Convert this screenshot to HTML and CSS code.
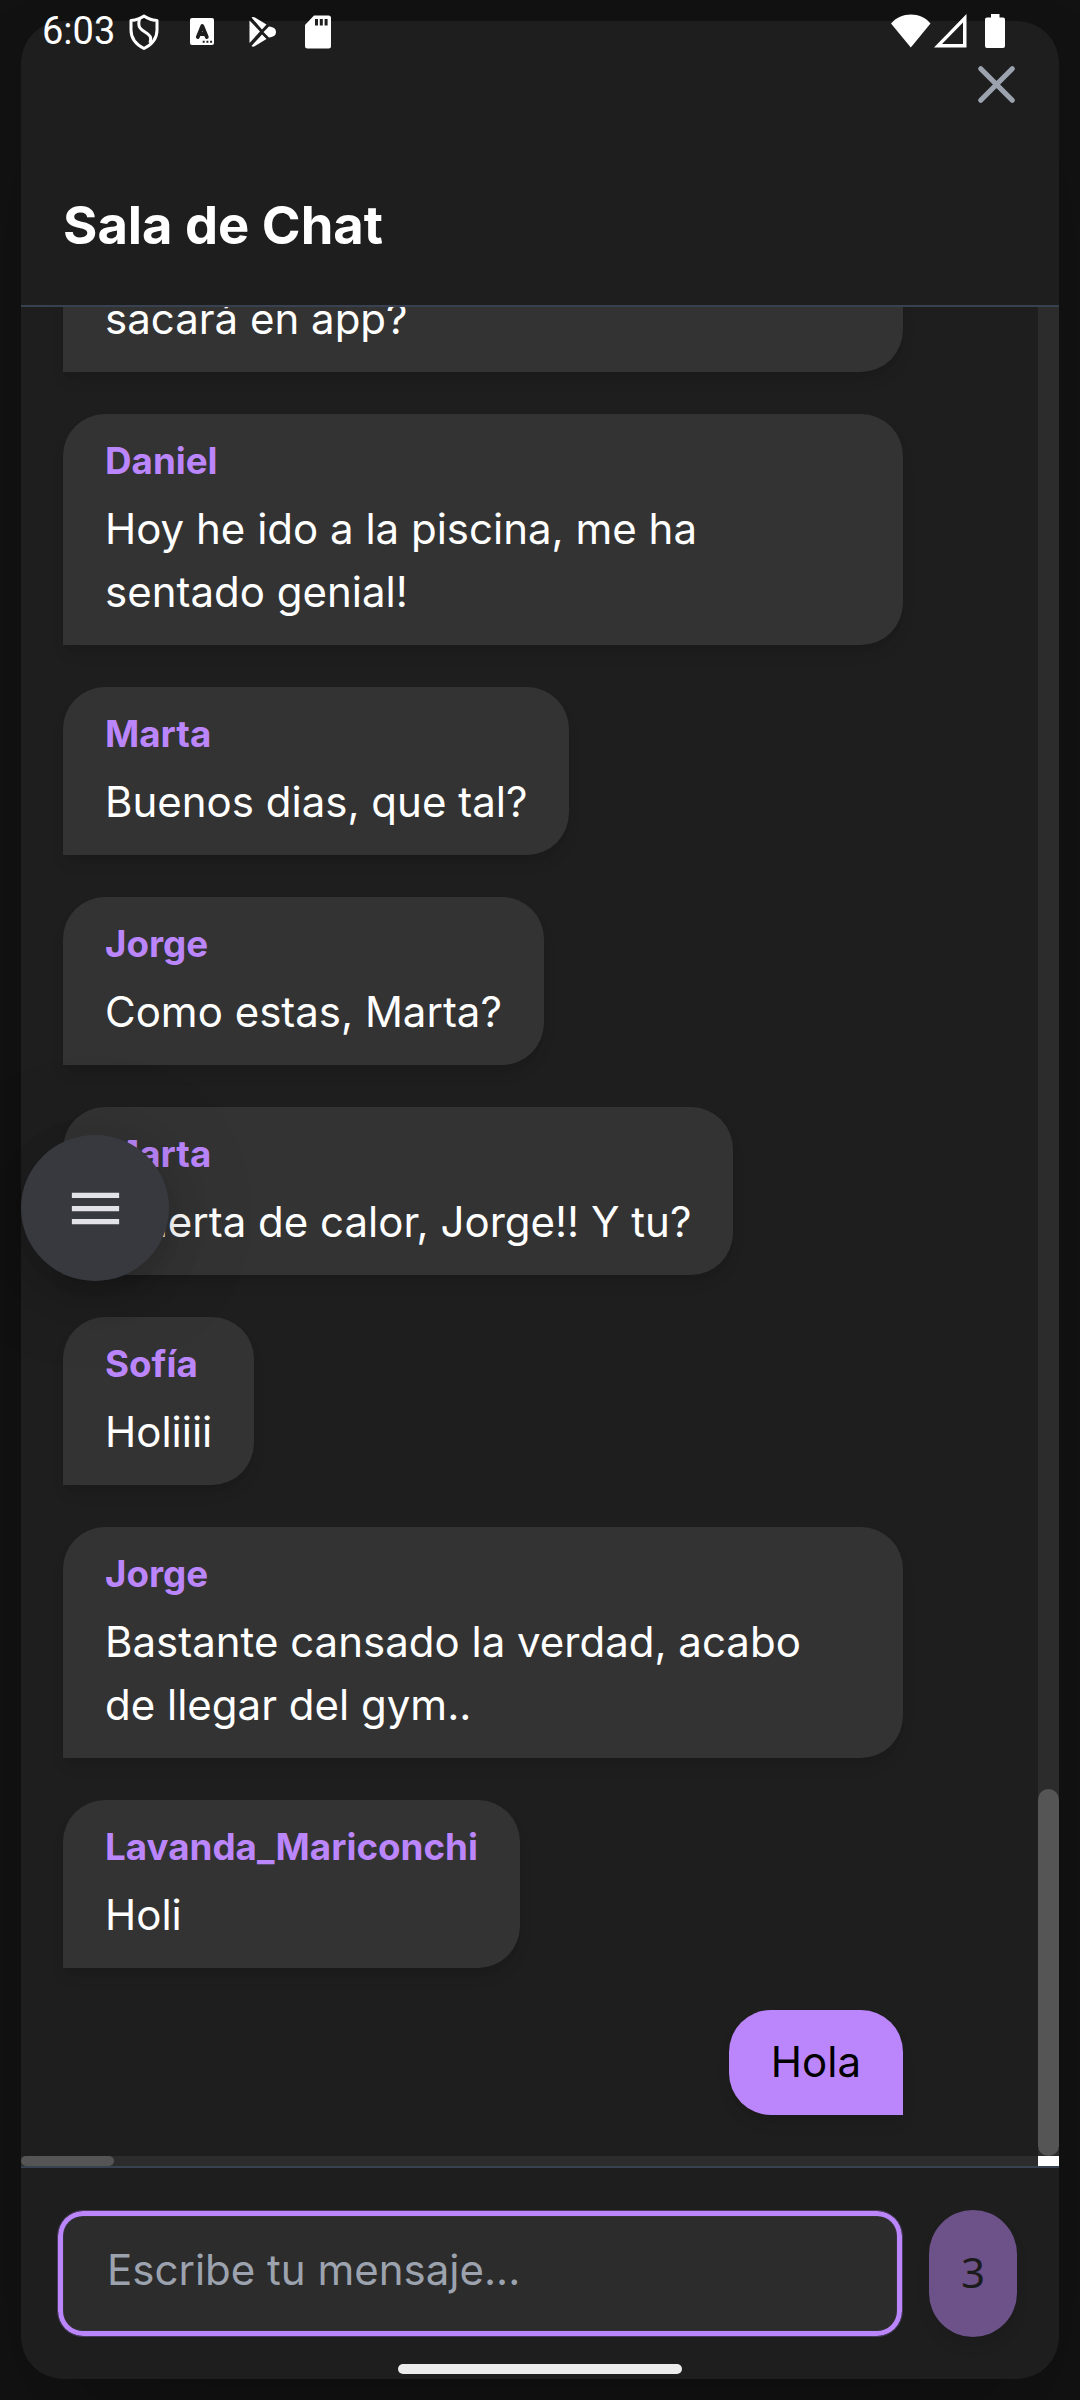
FILE: index.html
```html
<!DOCTYPE html>
<html lang="es">
<head>
<meta charset="utf-8">
<title>Sala de Chat</title>
<link rel="stylesheet" href="styles.css">
</head>
<body>
<div class="screen">
  <main class="panel">
    <header class="header">
      <button class="close" aria-label="Cerrar">
        <svg width="63" height="63" viewBox="0 0 24 24" fill="none" stroke="currentColor" stroke-width="2" stroke-linecap="round"><path d="M6 18L18 6M6 6l12 12"/></svg>
      </button>
      <h1 class="title">Sala de Chat</h1>
    </header>

    <section class="log">
      <div class="messages">
        <article class="bubble wide"><p class="text">sacará en app?</p></article>
        <article class="bubble"><p class="name">Daniel</p><p class="text">Hoy he ido a la piscina, me ha sentado genial!</p></article>
        <article class="bubble"><p class="name">Marta</p><p class="text">Buenos dias, que tal?</p></article>
        <article class="bubble"><p class="name">Jorge</p><p class="text">Como estas, Marta?</p></article>
        <article class="bubble"><p class="name">Marta</p><p class="text">Muerta de calor, Jorge!! Y tu?</p></article>
        <article class="bubble"><p class="name">Sofía</p><p class="text">Holiiii</p></article>
        <article class="bubble"><p class="name">Jorge</p><p class="text">Bastante cansado la verdad, acabo de llegar del gym..</p></article>
        <article class="bubble"><p class="name">Lavanda_Mariconchi</p><p class="text">Holi</p></article>
        <article class="bubble own"><p class="text">Hola</p></article>
      </div>
      <div class="vtrack"><div class="vthumb"></div></div>
      <div class="htrack"><div class="hthumb"></div></div>
      <div class="corner"></div>
    </section>

    <footer class="composer">
      <div class="field"><span class="placeholder">Escribe tu mensaje...</span></div>
      <button class="send">3</button>
    </footer>
  </main>

  <button class="fab" aria-label="Menú">
    <svg width="63" height="63" viewBox="0 0 24 24" fill="currentColor"><path d="M3 18h18v-2H3v2zm0-5h18v-2H3v2zm0-7v2h18V6H3z"/></svg>
  </button>

  <div class="status">
    <div class="status-left">
      <span class="time">6:03</span>
      <svg class="shield" width="30" height="36" viewBox="0 0 30 36" fill="none" stroke="#fff" stroke-width="3" stroke-linejoin="round"><path d="M15 2C11 5 7 6 2 6.500V16C2 25 8 31 15 34.500C22 31 28 25 28 16V6.500C23 6 19 5 15 2Z"/><path d="M10.500 5C8.500 13 11 15 16 18C21 21 23 23 21 29" stroke-width="3"/></svg>
      <svg class="abox" width="24" height="28" viewBox="0 0 24 28"><rect width="24" height="27" rx="2" fill="#fff"/><path d="M7.800 19L12.300 8L16.800 19M9.500 16H15" fill="none" stroke="#1e1e1e" stroke-width="3.800" stroke-linejoin="round" stroke-linecap="round"/><path d="M12.700 22.700h2v2h-2zM16.400 22.700h2v2h-2zM20.100 22.700h2v2h-2z" fill="#1e1e1e"/></svg>
      <svg class="play" width="28" height="32" viewBox="0 0 28 32" fill="#fff"><path d="M0.500 4.500L11 15.500L0.500 27ZM2.500 1.500C3.500 0.500 5 1 6 1.500L17.500 8.500L13 13.500ZM2.500 30L13 18.500L17.500 23L6 30C5 30.800 3.500 31 2.500 30ZM14.500 16L20 10.500C25 11 27 13 27 16S25 21 20 21.500Z"/></svg>
      <svg class="sd" width="26" height="34" viewBox="0 0 26 34"><path d="M9 0.500H23.500Q26 0.500 26 3V31Q26 33.500 23.500 33.500H2.500Q0 33.500 0 31V10Z" fill="#fff"/><path d="M10 4h3v6.500h-3zM14.800 4h3v6.500h-3zM19.600 4h3v6.500h-3z" fill="#1e1e1e"/></svg>
    </div>
    <div class="status-right">
      <svg class="wifi" width="40" height="34" viewBox="0 0 40 34"><path d="M0 9.500C10-2.500 30-2.500 39.500 9.500L19.800 33.500Z" fill="#fff"/></svg>
      <svg class="signal" width="33" height="34" viewBox="0 0 33 34"><path d="M0 33.500L32.500 0V33.500ZM8 30H29V8.500Z" fill="#fff" fill-rule="evenodd"/></svg>
      <svg class="battery" width="20" height="34" viewBox="0 0 20 34"><path d="M6 0H14.500V3.500H18Q20 3.500 20 5.500V32Q20 34 18 34H2Q0 34 0 32V5.500Q0 3.500 2 3.500H6Z" fill="#fff"/></svg>
    </div>
  </div>
  <div class="home-bar"></div>
</div>
</body>
</html>
```
FILE: styles.css
```css
* { box-sizing: border-box; margin: 0; }

body {
  background: #121212;
  color: #fff;
  font-family: Inter, "Noto Sans", sans-serif;
  font-size: 42px;
  line-height: 63px;
}

button {
  border: 0;
  padding: 0;
  background: none;
  font: inherit;
}

.screen {
  position: relative;
  width: 1080px;
  height: 2400px;
  padding: 21px;
  overflow: hidden;
}

.panel {
  display: flex;
  flex-direction: column;
  height: 2358px;
  border-radius: 42px;
  background: #1e1e1e;
  box-shadow: 0 66px 131px -31px rgba(0, 0, 0, .25);
}

.header {
  display: flex;
  flex-direction: column;
  height: 286px;
  padding: 32px 31px 0 42px;
  border-bottom: 2px solid #374151;
}

.close {
  display: flex;
  align-self: flex-end;
  color: #9ca3af;
}

.title {
  margin-top: 72px;
  font-size: 52.5px;
  font-weight: 700;
  line-height: 74px;
}

.log {
  display: grid;
  grid-template: 1849px 10px / 1017px 21px;
  height: 1859px;
}

.messages {
  display: flex;
  flex-direction: column;
  justify-content: flex-end;
  align-items: flex-start;
  gap: 42px;
  padding: 0 135px 41px 42px;
  overflow: hidden;
}

.bubble {
  flex: none;
  max-width: 840px;
  padding: 21px 42px;
  border-radius: 42px 42px 42px 0;
  background: #333;
  box-shadow: 0 10px 16px -3px rgba(0, 0, 0, .1), 0 5px 10px -5px rgba(0, 0, 0, .06);
}

.wide { width: 840px; }

.name {
  margin-bottom: 10.5px;
  color: #bb86fc;
  font-size: 36.75px;
  font-weight: 700;
  line-height: 52.5px;
}

.text {
  margin-top: -1px;
  padding-bottom: 1px;
}

.own {
  align-self: flex-end;
  border-radius: 42px 42px 0 42px;
  background: #bb86fc;
  color: #000;
}

.vtrack {
  display: flex;
  align-items: flex-end;
  background: #2c2c2c;
}

.vthumb {
  width: 21px;
  height: 367px;
  border-radius: 10.5px;
  background: #555;
}

.htrack { background: #2c2c2c; }

.hthumb {
  width: 93px;
  height: 10px;
  border-radius: 5px;
  background: #555;
}

.corner { background: #fff; }

.composer {
  display: flex;
  gap: 26px;
  height: 213px;
  padding: 42px 42px 42px 36px;
  border-top: 2px solid #374151;
}

.field {
  display: flex;
  align-items: center;
  width: 846px;
  height: 127px;
  padding-left: 49px;
  border: 1px solid #483a5c;
  border-radius: 26px;
  background: #2c2c2c;
  box-shadow: inset 0 0 0 5px #bb86fc, inset 0 0 0 6px #343338;
}

.placeholder {
  color: #9ca3af;
  margin-top: -8px;
}

.send {
  width: 88px;
  height: 127px;
  padding-bottom: 4px;
  border-radius: 44px;
  background: #6d5189;
  color: #1b1b1b;
  font-family: "Noto Sans", sans-serif;
  font-size: 42px;
  box-shadow: 0 10px 16px -3px rgba(0, 0, 0, .1);
}

.fab {
  position: absolute;
  left: 21px;
  top: 1135px;
  display: flex;
  align-items: center;
  justify-content: center;
  width: 148px;
  height: 146px;
  border-radius: 50%;
  background: #38393f;
  color: #e3e2e9;
  box-shadow: 0 8px 13px -3px rgba(0, 0, 0, .06), 0 16px 40px rgba(0, 0, 0, .1), 0 5px 100px rgba(0, 0, 0, .16);
}

.status {
  position: absolute;
  inset: 0 0 auto;
  display: flex;
  justify-content: space-between;
  height: 60px;
  padding: 14px 75px 0 42px;
}

.status-left,
.status-right {
  display: flex;
  align-items: flex-start;
}

.time {
  width: 87px;
  font-family: Roboto, sans-serif;
  font-size: 38px;
  line-height: 35px;
}

.abox { margin: 4px 0 0 31px; }
.play { margin: 2px 0 0 35px; }
.sd { margin: 1px 0 0 28px; }
.signal { margin-left: 3px; }
.battery { margin-left: 18px; }

.home-bar {
  position: absolute;
  left: 398px;
  top: 2364px;
  width: 284px;
  height: 10px;
  border-radius: 5px;
  background: #ececec;
}
```
